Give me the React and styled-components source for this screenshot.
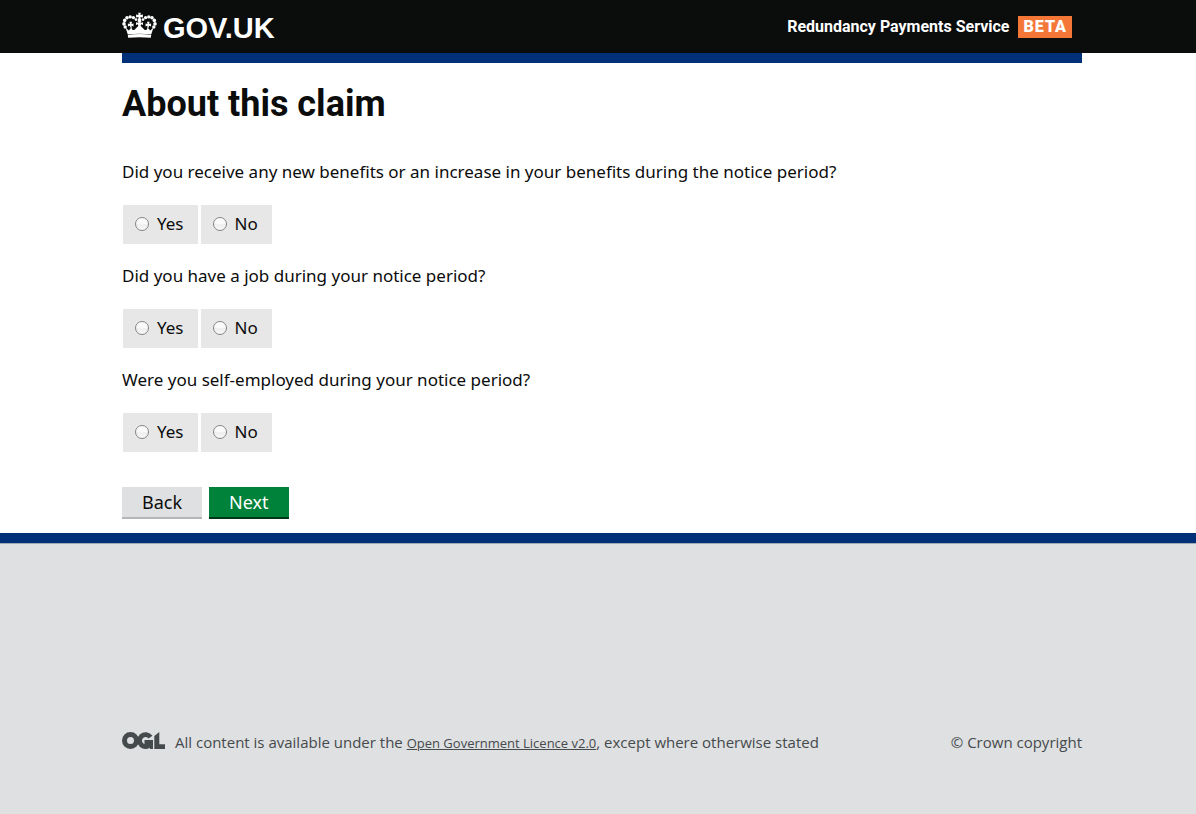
import React from "react";
import styled, { createGlobalStyle } from "styled-components";

const GlobalStyle = createGlobalStyle`
  *, *::before, *::after { box-sizing: border-box; }
  html, body { margin: 0; padding: 0; }
  body {
    background: #fff;
    color: #0b0c0c;
    font-family: "Noto Sans", "Open Sans", sans-serif;
  }
`;

const Page = styled.div`
  display: flex;
  flex-direction: column;
  min-height: 100vh;
`;

const Gutter = styled.div`
  padding: 0 30px 0 38px;
`;

const Container = styled.div`
  max-width: 960px;
  margin: 0 auto;
`;

const Header = styled.header`
  background: #0b0c0c;
  font-family: Roboto, sans-serif;
`;

const HeaderRow = styled(Container)`
  display: flex;
  align-items: center;
  justify-content: space-between;
  height: 53px;
  padding-right: 10px;
`;

const Logo = styled.a`
  display: flex;
  align-items: flex-start;
  gap: 6px;
  padding-top: 3px;
  color: #fff;
  font-family: "Liberation Sans", Arial, sans-serif;
  font-size: 29px;
  font-weight: 700;
  line-height: 32px;
  text-decoration: none;
`;

const Service = styled.div`
  display: flex;
  align-items: center;
  gap: 8px;
  color: #fff;
  font-size: 16px;
  font-weight: 700;
  line-height: 22px;
`;

const Beta = styled.strong`
  padding: 0 5px 0 6px;
  background: #f47738;
  letter-spacing: 1px;
`;

const BlueBar = styled.div`
  height: 10px;
  background: #003078;
`;

const Title = styled.h1`
  margin: 0;
  padding: 21px 0 38px;
  font-family: Roboto, sans-serif;
  font-size: 36px;
  font-weight: 700;
  line-height: 40px;
`;

const Question = styled.fieldset`
  min-width: 0;
  margin: 0 0 22px;
  padding: 0;
  border: 0;
`;

const Legend = styled.legend`
  padding: 0;
  margin-bottom: 23px;
  font-size: 17px;
  line-height: 20px;
`;

const Options = styled.div`
  display: flex;
  gap: 3px;
  padding-left: 1px;
`;

const Option = styled.label`
  display: flex;
  align-items: center;
  gap: 8px;
  height: 39px;
  padding: 0 14px 1px 12px;
  background: #e7e7e7;
  font-size: 17px;
  line-height: 20px;
`;

const Radio = styled.input`
  appearance: none;
  width: 14px;
  height: 14px;
  margin: 0;
  border: 1px solid #858585;
  border-radius: 50%;
  background: linear-gradient(#fff, #f8f8f8 50%, #eee 55%, #fafafa) border-box;
  &:checked { background: radial-gradient(#333 3px, #f4f4f4 4px); }
`;

const Actions = styled.div`
  display: flex;
  gap: 7px;
  padding: 13px 0 14px;
`;

const Button = styled.button`
  height: 32px;
  padding: 0 20px;
  border: 0;
  border-bottom: 2px solid ${(p) => (p.$primary ? "#003618" : "#b3b7ba")};
  background: ${(p) => (p.$primary ? "#00823b" : "#dee0e2")};
  color: ${(p) => (p.$primary ? "#fff" : "#0b0c0c")};
  font-family: inherit;
  font-size: 18px;
  line-height: 30px;
`;

const Footer = styled.footer`
  flex: 1;
  border-top: 10px solid #003078;
  background: #dee0e2;
  color: #454a4c;
  font-family: "Open Sans", "Noto Sans", sans-serif;
  font-size: 15px;
  line-height: 20px;
`;

const FooterInner = styled(Gutter)`
  padding-top: 188px;
  padding-bottom: 60px;
  border-top: 1px solid #a1acb2;
`;

const FooterRow = styled(Container)`
  display: flex;
  justify-content: space-between;
`;

const Licence = styled.div`
  display: flex;
  gap: 10px;
`;

const LicenceText = styled.p`
  margin: 0;
`;

const FooterLink = styled.a`
  color: inherit;
  font-size: 13px;
`;

const beads = [
  [14, 7.6, 1.4], [11.4, 5.6, 1.7], [8.2, 4.9, 1.7], [5, 5.8, 1.8], [2.7, 8.4, 1.8],
  [2, 11.9, 1.8], [3.2, 15, 1.7],
];

const CrownIcon = () => (
  <svg width="35" height="26" viewBox="0 0 35 26" fill="#fff" aria-hidden="true">
    <path d="M16.200 .8h2.600l-.4 2.200 2.500-.5v3l-2.500-.5.6 3h-3l.6-3-2.500.5v-3l2.500.5z" />
    <circle cx="17.5" cy="9" r="1.900" />
    {beads.map(([x, y, r]) => (
      <React.Fragment key={x}>
        <circle cx={x} cy={y} r={r} />
        <circle cx={35 - x} cy={y} r={r} />
      </React.Fragment>
    ))}
    <path d="M3.500 15.500l3.300 2.900 2-2.200-.9-2.400-2 .7v-3l2 .5-.5-2.200h2.600l-.5 2.200 2-.5v3l-2-.7.3 3.200c.6 1.300 2.900 1.200 3.700-.3l2.800-2.600-.4-1.800-1.900.7v-2.800l1.900.5h3.200l1.900-.5v2.800l-1.900-.7-.4 1.800 2.800 2.600c.8 1.500 3.100 1.600 3.700.3l.3-3.200-2 .7v-3l2 .5-.5-2.200h2.600l-.5 2.200 2-.5v3l-2-.7-.9 2.400 2 2.200 3.300-2.900-2.300 7q-12-1.400-23.400 0z" />
    <path d="M5.800 23q11.700-1.800 23.400 0l-.4 2.800q-11.300-1-22.600 0z" />
  </svg>
);

const OglIcon = () => (
  <svg width="43" height="18" viewBox="0 0 43 18" aria-hidden="true">
    <circle cx="8.500" cy="8.500" r="6" fill="none" stroke="#454a4c" strokeWidth="5" />
    <path d="M28.500 5.200A6 6 0 1 0 28.500 12V10.400H22.500" fill="none" stroke="#454a4c" strokeWidth="4.800" />
    <path d="M27 8h4v9h-3z" fill="#454a4c" />
    <path d="M32.300 4L37.300 0v12.200H43V17H32.300z" fill="#454a4c" />
  </svg>
);

const questions = [
  { id: "benefits", text: "Did you receive any new benefits or an increase in your benefits during the notice period?" },
  { id: "job", text: "Did you have a job during your notice period?" },
  { id: "self-employed", text: "Were you self-employed during your notice period?" },
];

export default function App() {
  return (
    <Page>
      <GlobalStyle />
      <Header>
        <Gutter>
          <HeaderRow>
            <Logo href="#"><CrownIcon />GOV.UK</Logo>
            <Service>Redundancy Payments Service <Beta>BETA</Beta></Service>
          </HeaderRow>
        </Gutter>
      </Header>
      <Gutter as="main">
        <Container>
          <BlueBar />
          <Title>About this claim</Title>
          <form onSubmit={(e) => e.preventDefault()}>
            {questions.map((q) => (
              <Question key={q.id}>
                <Legend>{q.text}</Legend>
                <Options>
                  {["Yes", "No"].map((answer) => (
                    <Option key={answer} htmlFor={`${q.id}-${answer}`}>
                      <Radio type="radio" id={`${q.id}-${answer}`} name={q.id} value={answer} />
                      {answer}
                    </Option>
                  ))}
                </Options>
              </Question>
            ))}
            <Actions>
              <Button type="button">Back</Button>
              <Button type="submit" $primary>Next</Button>
            </Actions>
          </form>
        </Container>
      </Gutter>
      <Footer>
        <FooterInner>
          <FooterRow>
            <Licence>
              <OglIcon />
              <LicenceText>
                All content is available under the <FooterLink href="#">Open Government Licence v2.0</FooterLink>, except where otherwise stated
              </LicenceText>
            </Licence>
            <LicenceText>© Crown copyright</LicenceText>
          </FooterRow>
        </FooterInner>
      </Footer>
    </Page>
  );
}
